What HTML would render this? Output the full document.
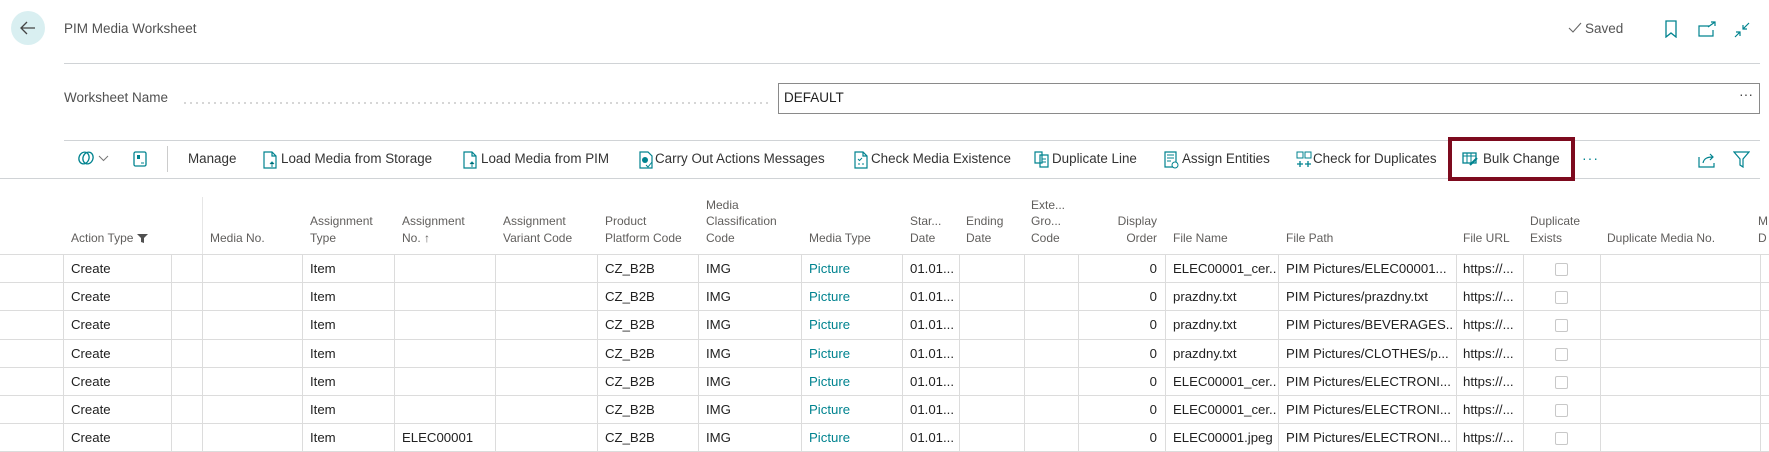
<!DOCTYPE html>
<html><head><meta charset="utf-8"><style>
*{box-sizing:border-box;margin:0;padding:0}
body{width:1769px;height:451px;overflow:hidden;background:#fff;font-family:"Liberation Sans",sans-serif;color:#212121;position:relative}
.a{position:absolute;white-space:nowrap}
.tb{font-size:13.4px;color:#333;top:151px;line-height:16px}
.ic{position:absolute;top:151px}
.hd{position:absolute;font-size:12px;color:#605e5c;line-height:16.5px;bottom:205px;white-space:nowrap}
.vl{position:absolute;top:254px;height:197px;width:1px;background:#dcdcdc}
.row{position:absolute;left:0;width:1769px;height:28.2px;border-bottom:1px solid #dcdcdc}
.row span{position:absolute;top:6px;font-size:13.2px;line-height:16px;white-space:nowrap;overflow:hidden}
.c1{left:71px}.c4{left:310px}.c5{left:402px}.c7{left:605px}.c8{left:706px}.c9{left:809px;color:#00838f}
.c10{left:910px}.c13{left:1078px;width:79px;text-align:right}.c14{left:1173px;width:104px}.c15{left:1286px;width:168px}.c16{left:1463px;width:58px}
.cb{position:absolute;left:1555px;top:8px;width:13px;height:13px;border:1px solid #c8c8c8;border-radius:2px}
</style></head><body>
<div class="a" style="left:11px;top:11px;width:34px;height:34px;border-radius:50%;background:#d9eff1"></div>
<svg class="a" style="left:19px;top:19px" width="18" height="18" viewBox="0 0 18 18"><path d="M16 9H3M8 3L2 9l6 6" stroke="#444" stroke-width="1.3" fill="none"/></svg>
<div class="a" style="left:64px;top:21px;font-size:13.5px;color:#505050">PIM Media Worksheet</div>
<svg class="a" style="left:1568px;top:22px" width="14" height="12"><path d="M1 6l4 4 8-9" stroke="#666" stroke-width="1.1" fill="none"/></svg>
<div class="a" style="left:1585px;top:21px;font-size:13.5px;color:#555">Saved</div>
<svg class="a" style="left:1664px;top:20px" width="14" height="18"><path d="M2 1h10v16l-5-4-5 4z" stroke="#00838f" stroke-width="1.3" fill="none"/></svg>
<svg class="a" style="left:1698px;top:21px" width="18" height="16"><path d="M11 5H1v10h14V9M10 6l7-5M13 1h4v4" stroke="#00838f" stroke-width="1.2" fill="none"/></svg>
<svg class="a" style="left:1733px;top:21px" width="18" height="18"><path d="M16 2l-6 6M10 4v4h4M2 16l5-5M3 11h4v4" stroke="#00838f" stroke-width="1.2" fill="none"/></svg>
<div class="a" style="left:64px;top:63px;width:1696px;height:1px;background:#d0d3d6"></div>
<div class="a" style="left:64px;top:90px;font-size:13.5px;color:#505050">Worksheet Name</div>
<div class="a" style="left:182px;top:102px;width:590px;height:2px;background-image:radial-gradient(circle,#c8c8c8 0.9px,transparent 1px);background-size:6px 2px"></div>
<div class="a" style="left:778px;top:83px;width:982px;height:31px;border:1px solid #8a8a8a"></div>
<div class="a" style="left:784px;top:90px;font-size:13.5px">DEFAULT</div>
<div class="a" style="left:1739px;top:86px;font-size:14px;color:#444">···</div>
<div class="a" style="left:64px;top:140px;width:1696px;height:1px;background:#d0d3d6"></div>
<div class="a" style="left:0;top:178px;width:1760px;height:1px;background:#d0d3d6"></div>
<svg class="ic" style="left:77px;top:150px" width="18" height="16"><ellipse cx="7" cy="8" rx="5" ry="6" stroke="#00838f" fill="none" stroke-width="1.3" transform="rotate(20 7 8)"/><ellipse cx="11" cy="8" rx="5" ry="6" stroke="#00838f" fill="none" stroke-width="1.3" transform="rotate(20 11 8)"/></svg>
<svg class="ic" style="left:98px;top:155px" width="11" height="7"><path d="M1 1l4.5 4.5L10 1" stroke="#777" fill="none"/></svg>
<svg class="ic" style="left:133px;top:151px" width="14" height="16"><rect x="1" y="1" width="12" height="14" rx="1.5" stroke="#00838f" fill="none" stroke-width="1.3"/><rect x="4" y="4" width="3" height="4" fill="#00838f"/><path d="M8 12h3" stroke="#00838f"/></svg>
<div class="a" style="left:167px;top:146px;width:1px;height:26px;background:#ccc"></div>
<div class="a tb" style="left:188px">Manage</div>
<svg class="ic" style="left:263px" width="14" height="18"><path d="M1 1h8l4 4v12H1z M9 1v4h4" stroke="#00838f" fill="none" stroke-width="1.2"/><path d="M9 16v-5M7 13l2-2 2 2" stroke="#00838f"/></svg>
<div class="a tb" style="left:281px">Load Media from Storage</div>
<svg class="ic" style="left:463px" width="14" height="18"><path d="M1 1h8l4 4v12H1z M9 1v4h4" stroke="#00838f" fill="none" stroke-width="1.2"/><path d="M9 16v-5M7 13l2-2 2 2" stroke="#00838f"/></svg>
<div class="a tb" style="left:481px">Load Media from PIM</div>
<svg class="ic" style="left:639px" width="14" height="18"><path d="M1 1h8l4 4v12H1z" stroke="#00838f" fill="none" stroke-width="1.2"/><circle cx="6" cy="9" r="3" fill="#00838f"/><path d="M7 14l2 2 4-5" stroke="#00838f" fill="none"/></svg>
<div class="a tb" style="left:655px">Carry Out Actions Messages</div>
<svg class="ic" style="left:854px" width="14" height="18"><path d="M1 1h8l4 4v12H1z M9 1v4h4" stroke="#00838f" fill="none" stroke-width="1.2"/><path d="M4 8l1.5 1.5L8 7M4 13h2M8 13h2" stroke="#00838f" fill="none"/></svg>
<div class="a tb" style="left:871px">Check Media Existence</div>
<svg class="ic" style="left:1034px" width="16" height="17"><path d="M1 1h7v11H1zM6 4h8v12H6z" stroke="#00838f" fill="#fff" stroke-width="1.2"/><path d="M8 8h4M8 11h4" stroke="#00838f"/></svg>
<div class="a tb" style="left:1052px">Duplicate Line</div>
<svg class="ic" style="left:1164px" width="16" height="18"><path d="M1 1h11v15H1z" stroke="#00838f" fill="none" stroke-width="1.2"/><path d="M3 4h7M3 7h7M3 10h4" stroke="#00838f"/><circle cx="11" cy="14" r="3" stroke="#00838f" fill="#fff"/></svg>
<div class="a tb" style="left:1182px">Assign Entities</div>
<svg class="ic" style="left:1296px" width="16" height="18"><rect x="1" y="1" width="6" height="6" stroke="#00838f" fill="none"/><rect x="9" y="1" width="6" height="6" stroke="#00838f" fill="none"/><path d="M4 10v6M1 13h6M12 10v6M9 13h6" stroke="#00838f" stroke-width="1.3"/></svg>
<div class="a tb" style="left:1313px">Check for Duplicates</div>
<div class="a" style="left:1448px;top:137px;width:127px;height:44px;border:4px solid #7d0a1e"></div>
<svg class="ic" style="left:1462px;top:152px" width="16" height="14"><rect x="1" y="1" width="13" height="10" stroke="#00838f" fill="none" stroke-width="1.3"/><path d="M1 4h13M5 1v10M9 1v10" stroke="#00838f"/><path d="M8 13l7-7" stroke="#00838f" stroke-width="2"/></svg>
<div class="a tb" style="left:1483px">Bulk Change</div>
<div class="a" style="left:1582px;top:150px;font-size:14px;color:#00838f;letter-spacing:1px">···</div>
<svg class="ic" style="left:1698px;top:152px" width="18" height="16"><path d="M1 5v10h15v-4" stroke="#00838f" fill="none" stroke-width="1.2"/><path d="M5 11c1-5 5-6 10-6M12 2l3 3-3 3" stroke="#00838f" fill="none" stroke-width="1.2"/></svg>
<svg class="ic" style="left:1733px;top:151px" width="17" height="17"><path d="M1 1h15l-6 7v8l-3-2V8z" stroke="#00838f" fill="none" stroke-width="1.2"/></svg>
<div class="hd" style="left:71px">Action Type <svg width="11" height="10" style="vertical-align:-1px"><path d="M0 1h11L7 5v5l-3-1V5z" fill="#505050"/></svg></div>
<div class="a" style="left:202px;top:197px;width:1px;height:57px;background:#e6e6e6"></div>
<div class="hd" style="left:210px">Media No.</div>
<div class="hd" style="left:310px">Assignment<br>Type</div>
<div class="hd" style="left:402px">Assignment<br>No. ↑</div>
<div class="hd" style="left:503px">Assignment<br>Variant Code</div>
<div class="hd" style="left:605px">Product<br>Platform Code</div>
<div class="hd" style="left:706px">Media<br>Classification<br>Code</div>
<div class="hd" style="left:809px">Media Type</div>
<div class="hd" style="left:910px">Star...<br>Date</div>
<div class="hd" style="left:966px">Ending<br>Date</div>
<div class="hd" style="left:1031px">Exte...<br>Gro...<br>Code</div>
<div class="hd" style="left:1078px;width:79px;text-align:right">Display<br>Order</div>
<div class="hd" style="left:1173px">File Name</div>
<div class="hd" style="left:1286px">File Path</div>
<div class="hd" style="left:1463px">File URL</div>
<div class="hd" style="left:1530px">Duplicate<br>Exists</div>
<div class="hd" style="left:1607px">Duplicate Media No.</div>
<div class="hd" style="left:1758px">M<br>D</div>
<div class="a" style="left:0;top:254px;width:1769px;height:1px;background:#dcdcdc"></div>
<div class="vl" style="left:63px"></div><div class="vl" style="left:171px"></div><div class="vl" style="left:202px"></div><div class="vl" style="left:302px"></div><div class="vl" style="left:394px"></div><div class="vl" style="left:495px"></div><div class="vl" style="left:597px"></div><div class="vl" style="left:698px"></div><div class="vl" style="left:801px"></div><div class="vl" style="left:902px"></div><div class="vl" style="left:959px"></div><div class="vl" style="left:1024px"></div><div class="vl" style="left:1078px"></div><div class="vl" style="left:1165px"></div><div class="vl" style="left:1278px"></div><div class="vl" style="left:1456px"></div><div class="vl" style="left:1523px"></div><div class="vl" style="left:1600px"></div><div class="vl" style="left:1760px"></div>
<div class="row" style="top:255px"><span class="c1">Create</span><span class="c4">Item</span><span class="c7">CZ_B2B</span><span class="c8">IMG</span><span class="c9">Picture</span><span class="c10">01.01...</span><span class="c13">0</span><span class="c14">ELEC00001_cer...</span><span class="c15">PIM Pictures/ELEC00001...</span><span class="c16">https://...</span><i class="cb"></i></div>
<div class="row" style="top:283.2px"><span class="c1">Create</span><span class="c4">Item</span><span class="c7">CZ_B2B</span><span class="c8">IMG</span><span class="c9">Picture</span><span class="c10">01.01...</span><span class="c13">0</span><span class="c14">prazdny.txt</span><span class="c15">PIM Pictures/prazdny.txt</span><span class="c16">https://...</span><i class="cb"></i></div>
<div class="row" style="top:311.4px"><span class="c1">Create</span><span class="c4">Item</span><span class="c7">CZ_B2B</span><span class="c8">IMG</span><span class="c9">Picture</span><span class="c10">01.01...</span><span class="c13">0</span><span class="c14">prazdny.txt</span><span class="c15">PIM Pictures/BEVERAGES...</span><span class="c16">https://...</span><i class="cb"></i></div>
<div class="row" style="top:339.6px"><span class="c1">Create</span><span class="c4">Item</span><span class="c7">CZ_B2B</span><span class="c8">IMG</span><span class="c9">Picture</span><span class="c10">01.01...</span><span class="c13">0</span><span class="c14">prazdny.txt</span><span class="c15">PIM Pictures/CLOTHES/p...</span><span class="c16">https://...</span><i class="cb"></i></div>
<div class="row" style="top:367.8px"><span class="c1">Create</span><span class="c4">Item</span><span class="c7">CZ_B2B</span><span class="c8">IMG</span><span class="c9">Picture</span><span class="c10">01.01...</span><span class="c13">0</span><span class="c14">ELEC00001_cer...</span><span class="c15">PIM Pictures/ELECTRONI...</span><span class="c16">https://...</span><i class="cb"></i></div>
<div class="row" style="top:396px"><span class="c1">Create</span><span class="c4">Item</span><span class="c7">CZ_B2B</span><span class="c8">IMG</span><span class="c9">Picture</span><span class="c10">01.01...</span><span class="c13">0</span><span class="c14">ELEC00001_cer...</span><span class="c15">PIM Pictures/ELECTRONI...</span><span class="c16">https://...</span><i class="cb"></i></div>
<div class="row" style="top:424.2px"><span class="c1">Create</span><span class="c4">Item</span><span class="c5">ELEC00001</span><span class="c7">CZ_B2B</span><span class="c8">IMG</span><span class="c9">Picture</span><span class="c10">01.01...</span><span class="c13">0</span><span class="c14">ELEC00001.jpeg</span><span class="c15">PIM Pictures/ELECTRONI...</span><span class="c16">https://...</span><i class="cb"></i></div>
</body></html>
